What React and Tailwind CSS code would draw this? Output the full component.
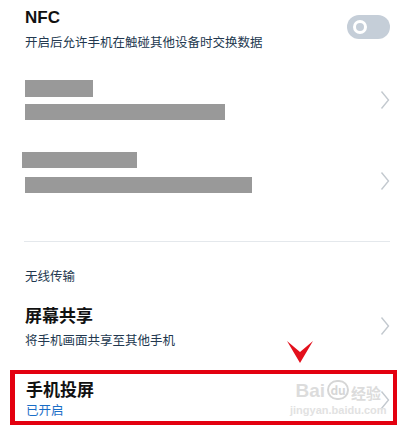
import React from "react";

const Chevron = ({ className = "" }) => (
  <svg width="10" height="20" viewBox="0 0 10 20" className={className}>
    <polyline points="1.5,1.5 8.5,10 1.5,18.5" fill="none" stroke="#c3c9cf" strokeWidth="1.4" />
  </svg>
);

export default function App() {
  return (
    <div
      className="relative w-[408px] h-[437px] overflow-hidden bg-white"
      style={{ fontFamily: '"Noto Sans CJK SC", "Noto Sans", sans-serif' }}
    >
      <div className="flex flex-col pl-[25px] pr-[18px]">
        {/* NFC */}
        <div className="flex items-start justify-between pt-[8px]">
          <div className="flex flex-col">
            <div className="text-[17px] leading-[20px] font-bold text-[#111]" style={{ fontFamily: '"Liberation Sans", "Noto Sans CJK SC", sans-serif' }}>NFC</div>
            <div className="mt-[6px] text-[12.5px] leading-[16px] text-[#22384f]">开启后允许手机在触碰其他设备时交换数据</div>
          </div>
          <div className="mt-[7px] flex h-[24px] w-[43px] items-center rounded-full bg-[#c5ced8] pl-[6px]">
            <div className="h-[14px] w-[14px] rounded-full border-[3px] border-white bg-[#c5ced8]" />
          </div>
        </div>

        {/* redacted row 1 */}
        <div className="mt-[30px] flex items-center justify-between">
          <div className="flex flex-col gap-[7px]">
            <div className="h-[17px] w-[68px] bg-[#999]" />
            <div className="h-[16px] w-[200px] bg-[#999]" />
          </div>
          <Chevron />
        </div>

        {/* redacted row 2 */}
        <div className="mt-[32px] flex items-end justify-between">
          <div className="flex flex-col gap-[9px]">
            <div className="-ml-[3px] h-[16px] w-[115px] bg-[#999]" />
            <div className="h-[16px] w-[227px] bg-[#999]" />
          </div>
          <Chevron className="mb-[2px]" />
        </div>

        <div className="mt-[48px] -ml-[1px] h-px bg-[#e4e8ec]" />

        <div className="mt-[26px] text-[12.5px] leading-[16px] text-[#22384f]">无线传输</div>

        {/* 屏幕共享 */}
        <div className="mt-[20px] flex items-center justify-between">
          <div className="flex flex-col">
            <div className="text-[17px] leading-[22px] font-bold text-[#111]">屏幕共享</div>
            <div className="mt-[6px] text-[12.5px] leading-[16px] text-[#22384f]">将手机画面共享至其他手机</div>
          </div>
          <Chevron />
        </div>

        {/* 手机投屏 */}
        <div className="mt-[31px] flex items-center justify-between">
          <div className="flex flex-col pl-[1px]">
            <div className="text-[17px] leading-[20px] font-bold text-[#111]">手机投屏</div>
            <div className="mt-[3px] text-[12.5px] leading-[15px] text-[#1a6ec7]">已开启</div>
          </div>
          <Chevron className="mt-[4px]" />
        </div>
      </div>

      {/* watermark */}
      <div className="absolute left-[290px] top-[380px] flex flex-col items-center">
        <div className="flex items-end gap-[2px] leading-none">
          <span className="text-[19px] font-bold text-[#dcdcdc]" style={{ fontFamily: '"Liberation Sans", sans-serif' }}>Bai</span>
          <span className="flex h-[20px] w-[22px] items-center justify-center rounded-full border-2 border-[#d6d6d6] text-[12px] font-bold text-[#d6d6d6]">du</span>
          <span className="text-[15px] font-bold text-[#dcdcdc]">经验</span>
        </div>
        <div className="mt-[4px] text-[11px] font-bold leading-[12px] text-[#e2e2e2]" style={{ fontFamily: '"Liberation Sans", sans-serif' }}>jingyan.baidu.com</div>
      </div>

      {/* red annotation box */}
      <div className="absolute left-[10px] top-[370px] h-[55px] w-[387px] border-[4px] border-l-[5px] border-[#e3000f]" />

      {/* red arrow */}
      <svg className="absolute left-[286px] top-[340px]" width="28" height="24" viewBox="0 0 28 24">
        <polygon points="1,1 14,23 27,1 14,12" fill="#e3101c" />
      </svg>
    </div>
  );
}
